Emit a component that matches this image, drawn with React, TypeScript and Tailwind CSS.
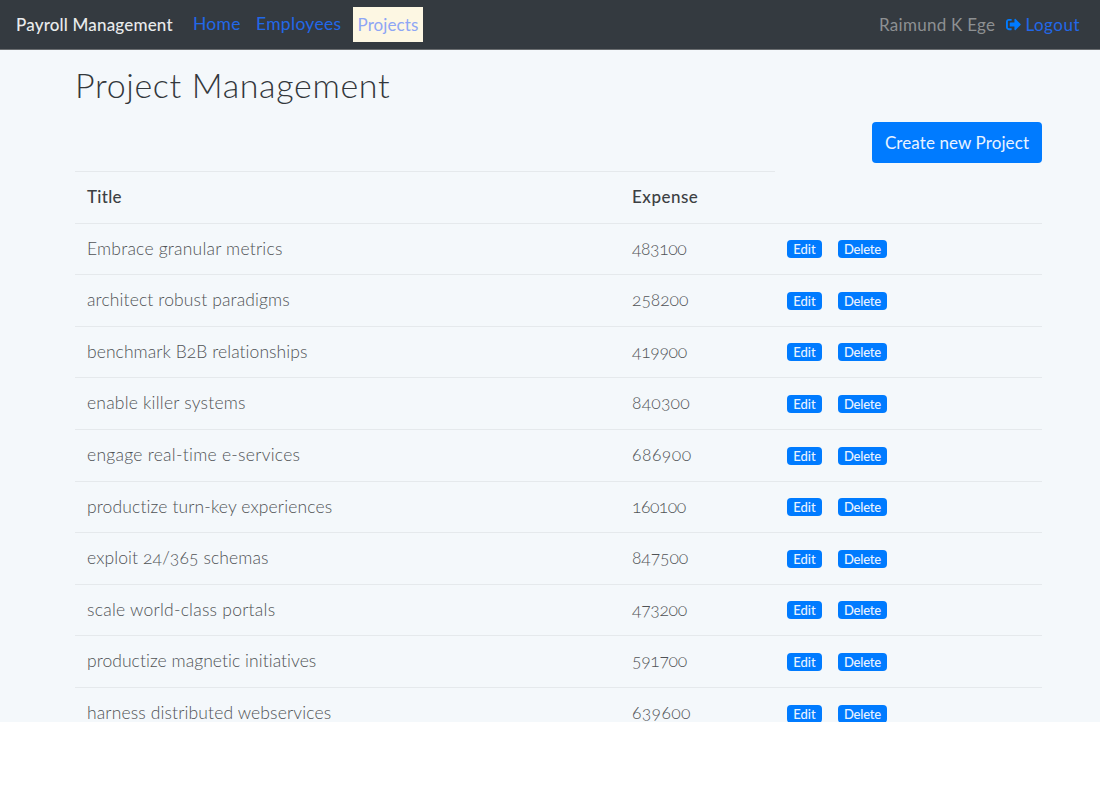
import { FaSignOutAlt } from "react-icons/fa";

const projects = [
  { title: "Embrace granular metrics", expense: "483100", tracking: "tracking-[0.21px]", digits: "tracking-[-0.4px]" },
  { title: "architect robust paradigms", expense: "258200", tracking: "tracking-[0.13px]", digits: "tracking-[-0.05px]" },
  { title: "benchmark B2B relationships", expense: "419900", tracking: "tracking-[0.06px]", digits: "tracking-[-0.3px]" },
  { title: "enable killer systems", expense: "840300", tracking: "tracking-[0.21px]", digits: "tracking-[0.2px]" },
  { title: "engage real-time e-services", expense: "686900", tracking: "tracking-[0.27px]", digits: "tracking-[0.5px]" },
  { title: "productize turn-key experiences", expense: "160100", tracking: "tracking-[0.13px]", digits: "tracking-[-0.5px]" },
  { title: "exploit 24/365 schemas", expense: "847500", tracking: "tracking-[0.11px]", digits: "tracking-[-0.1px]" },
  { title: "scale world-class portals", expense: "473200", tracking: "tracking-[0.24px]", digits: "tracking-[-0.3px]" },
  { title: "productize magnetic initiatives", expense: "591700", tracking: "tracking-[0.05px]", digits: "tracking-[-0.3px]" },
  { title: "harness distributed webservices", expense: "639600", tracking: "tracking-[0.13px]", digits: "tracking-[0.35px]" },
];

function Navbar() {
  return (
    <nav className="flex h-[50px] shrink-0 items-center border-b border-[#6a6d70] bg-[#343a40] pl-4 pr-5 text-[17px] whitespace-nowrap">
      <span className="w-[177px] font-medium tracking-[0.18px] text-[#e9ebec]">Payroll Management</span>
      <a className="w-[63px] text-[17.5px] tracking-[0.25px] text-[#2268e8]">Home</a>
      <a className="w-[97px] text-[17.5px] tracking-[0.3px] text-[#2268e8]">Employees</a>
      <a className="flex h-[35px] w-[70px] items-center justify-center bg-[#fdf7e3] tracking-[0.1px] text-[#8ea6f5]">
        Projects
      </a>
      <span className="mr-[11px] ml-auto tracking-[0.28px] text-[#8d9092]">Raimund K Ege</span>
      <a className="flex items-center gap-1 tracking-[0.5px] text-[#2268e8]">
        <FaSignOutAlt className="size-[15px] text-[#007bff]" />
        Logout
      </a>
    </nav>
  );
}

export default function App() {
  return (
    <div className="h-[800px] overflow-hidden bg-white font-[Lato,sans-serif]">
      <div className="flex h-[722px] flex-col overflow-hidden bg-[#f4f8fb]">
        <Navbar />
        <main className="ml-[75px] w-[967px] shrink-0">
          <h1 className="mt-[13px] h-[45px] text-[34px] leading-[44px] font-light tracking-[0.65px] whitespace-nowrap text-[#33373b]">
            Project Management
          </h1>
          <div className="mt-[14px] flex h-[41px] justify-end">
            <button className="h-[41px] w-[170px] rounded-[4px] bg-[#007bff] text-[17px] tracking-[0.1px] whitespace-nowrap text-[#e9f3ff]">
              Create new Project
            </button>
          </div>
          <div className="mt-2 w-[700px] border-t border-[#e5e9ec]" />
          <div className="grid h-[50.7px] grid-cols-[545px_155px_1fr] items-center pb-px pl-3 text-[17px] font-medium text-[#3c4043]">
            <span className="tracking-[0.3px]">Title</span>
            <span className="tracking-[0.5px]">Expense</span>
          </div>
          {projects.map((p) => (
            <div
              key={p.title}
              className="grid h-[51.6px] grid-cols-[545px_155px_1fr] items-center border-t border-[#e5e9ec] pb-[0.5px] pl-3 text-[17.5px] font-light whitespace-nowrap text-[#505356] [font-feature-settings:'onum']"
            >
              <span className={p.tracking}>{p.title}</span>
              <span className={p.digits}>{p.expense}</span>
              <span className="flex gap-4 pt-px text-[13px] font-medium text-[#e9f3ff]">
                <button className="h-[18px] w-[35px] rounded-[4px] bg-[#007bff] leading-[18px]">Edit</button>
                <button className="h-[18px] w-[49px] rounded-[4px] bg-[#007bff] leading-[18px] tracking-[-0.2px]">Delete</button>
              </span>
            </div>
          ))}
        </main>
      </div>
    </div>
  );
}
